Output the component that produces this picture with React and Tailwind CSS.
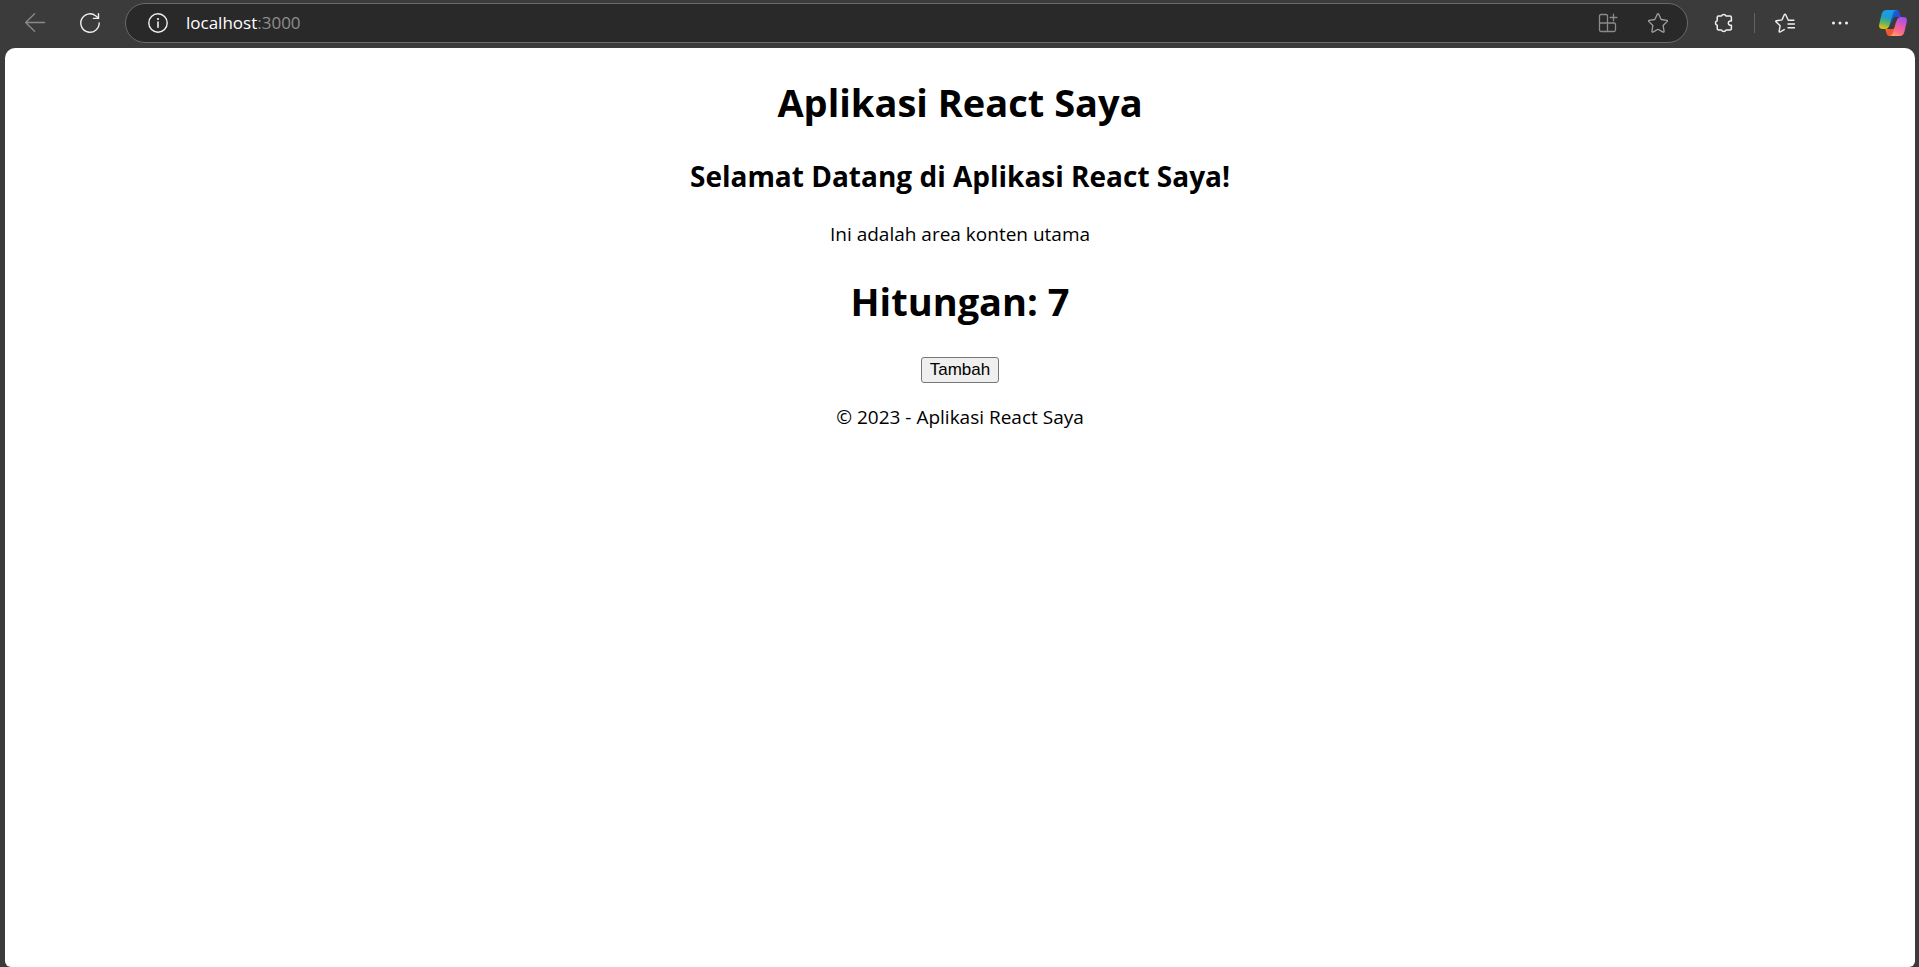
import { useState } from "react";

const stroke = {
  fill: "none",
  stroke: "currentColor",
  strokeWidth: 1.4,
  strokeLinecap: "round",
  strokeLinejoin: "round",
};

function BackIcon() {
  return (
    <svg viewBox="0 0 20 20" className="size-5" {...stroke} strokeWidth={1.3}>
      <path d="M19.5 9.5H.8M9.6.8.6 9.5l9 8.7" />
    </svg>
  );
}

function ReloadIcon() {
  return (
    <svg viewBox="0 0 20 20" className="size-5" {...stroke}>
      <path d="M19.2 10A9.2 9.2 0 1 1 15.6 2.7L18.4 5" />
      <path d="M18.5.8v4.6h-5" />
    </svg>
  );
}

function InfoIcon() {
  return (
    <svg viewBox="0 0 20 20" className="size-5" {...stroke}>
      <circle cx="10" cy="10" r="9.2" />
      <path d="M10 9v5.2" strokeWidth={1.6} />
      <circle cx="10" cy="6" r="1.1" fill="currentColor" stroke="none" />
    </svg>
  );
}

function AppsIcon() {
  return (
    <svg viewBox="0 0 20 20" className="size-5" {...stroke} strokeWidth={1.3}>
      <path d="M9.500 10V3Q9.500 1.500 8 1.500H3Q1.500 1.500 1.500 3V17Q1.500 18.500 3 18.500H16Q17.500 18.500 17.500 17V11.500Q17.500 10 16 10H1.500M9.500 10v8.500" />
      <path d="M15.500 1.200v6.600M12.200 4.500h6.600" />
    </svg>
  );
}

function StarIcon() {
  return (
    <svg viewBox="0 0 20 20" className="size-5" {...stroke} strokeWidth={1.3}>
      <path d="M9.300 1.200q.7-1 1.400 0l2.500 5.300 5.700.8q1 .3.4 1.100l-4.200 4.100 1 5.900q0 1-1 .7L10 16.300l-5.100 2.800q-1 .3-1-.7l1-5.900L.7 8.400q-.6-.8.4-1.100l5.700-.8z" />
    </svg>
  );
}

function ExtensionsIcon() {
  return (
    <svg viewBox="0 0 20 20" className="size-5" {...stroke} strokeWidth={1.5}>
      <path d="M5.600 3.100H8.500A2.400 2.400 0 0 1 13 3.100H17Q18.400 3.100 18.400 4.500V7.900H17A2.200 2.200 0 0 0 17 12.200H18.400V15.500Q18.400 17 17 17H13A2.400 2.400 0 0 1 8.500 17H5.700Q4.200 17 4.200 15.500V12.300A2.400 2.400 0 0 1 4.200 7.700V4.500Q4.200 3.100 5.600 3.100Z" />
    </svg>
  );
}

function FavoritesIcon() {
  return (
    <svg viewBox="0 0 20 20" className="size-5" {...stroke}>
      <path d="M18.900 7.300H13.300L10.700 1.700q-.7-1.100-1.400 0L7 6.900l-5.600.8q-1 .3-.4 1.100l4.100 4-1 5.500q0 1 1 .7L9.200 16.600" />
      <path d="M13 11h6.500M13 14.700h6.500" />
    </svg>
  );
}

function MoreIcon() {
  return (
    <svg viewBox="0 0 20 20" className="size-5" fill="currentColor">
      <circle cx="3.500" cy="10" r="1.500" />
      <circle cx="10" cy="10" r="1.500" />
      <circle cx="16.500" cy="10" r="1.500" />
    </svg>
  );
}

function CopilotIcon() {
  return (
    <svg viewBox="0 0 28 26" className="h-[26px] w-7">
      <defs>
        <linearGradient id="cp-left" x1=".6" y1="0" x2=".4" y2="1">
          <stop offset="0" stopColor="#189bf0" />
          <stop offset=".4" stopColor="#1c9fc4" />
          <stop offset=".7" stopColor="#5fb463" />
          <stop offset="1" stopColor="#e8c20e" />
        </linearGradient>
        <linearGradient id="cp-top" x1="0" y1="0" x2="1" y2="1">
          <stop offset="0" stopColor="#1790f0" />
          <stop offset=".5" stopColor="#1c4fd0" />
          <stop offset="1" stopColor="#2968e0" />
        </linearGradient>
        <linearGradient id="cp-right" x1=".7" y1="0" x2=".3" y2="1">
          <stop offset="0" stopColor="#a14ff0" />
          <stop offset=".45" stopColor="#e45bb0" />
          <stop offset=".75" stopColor="#fb6b87" />
          <stop offset="1" stopColor="#fda06a" />
        </linearGradient>
        <linearGradient id="cp-bottom" x1="0" y1="0" x2="1" y2="1">
          <stop offset="0" stopColor="#f7a51c" />
          <stop offset=".5" stopColor="#f0532e" />
          <stop offset="1" stopColor="#f86f5c" />
        </linearGradient>
      </defs>
      <path d="M8 0H17.500Q19.700 0 20.400 2.200L21.700 7H17.500Q15 7 14.200 9.500L12 17Z" fill="url(#cp-top)" />
      <path d="M20 26H10.500Q8.300 26 7.600 23.800L6.300 19H10.500Q13 19 13.800 16.500L16 9Z" fill="url(#cp-bottom)" />
      <path d="M7.500 0H16.500Q14.700.6 13.900 3.200L10.400 15.500Q9.400 19 6 19H4Q-.8 19 .3 14L2.500 4.500Q3.500 0 7.500 0Z" fill="url(#cp-left)" />
      <path d="M20.500 26H11.500Q13.300 25.400 14.100 22.800L17.600 10.500Q18.600 7 22 7H24Q28.800 7 27.700 12L25.500 21.500Q24.500 26 20.500 26Z" fill="url(#cp-right)" />
      <path d="M14 8.500Q14.600 7 16.500 7H19.800Q18.200 8 17.400 10.500L15.400 17.500Q15 19 13.500 19H9Q10.300 18 10.900 16Z" fill="#3b3b3b" />
    </svg>
  );
}

function BrowserBar() {
  return (
    <header className="flex h-12 items-center pt-0 pr-3 pb-0.5 pl-[25px] text-[#f0f0f0]">
      <button type="button" aria-label="Back" className="text-[#8a8a8a]">
        <BackIcon />
      </button>
      <button type="button" aria-label="Reload" className="ml-[35px]">
        <ReloadIcon />
      </button>
      <div className="ml-[25px] flex h-10 flex-1 items-center rounded-full border border-[#6a6a6a] bg-[#292929] pr-[19px] pl-[22px]">
        <button type="button" aria-label="Site information">
          <InfoIcon />
        </button>
        <a
          href="http://localhost:3000"
          className="ml-[18px] flex-1 text-[17px] leading-6 text-white"
        >
          localhost<span className="text-[#8e8e8e]">:3000</span>
        </a>
        <button type="button" aria-label="Install app" className="text-[#8a8a8a]">
          <AppsIcon />
        </button>
        <button type="button" aria-label="Add to favorites" className="ml-[30px] text-[#a0a0a0]">
          <StarIcon />
        </button>
      </div>
      <button type="button" aria-label="Extensions" className="ml-[25px]">
        <ExtensionsIcon />
      </button>
      <span className="ml-[21px] h-5 w-px bg-[#636363]" />
      <button type="button" aria-label="Favorites" className="ml-5">
        <FavoritesIcon />
      </button>
      <button type="button" aria-label="More" className="ml-[35px]">
        <MoreIcon />
      </button>
      <button type="button" aria-label="Copilot" className="ml-[29px]">
        <CopilotIcon />
      </button>
    </header>
  );
}

export default function App() {
  const [count, setCount] = useState(7);

  return (
    <div className="flex min-h-screen flex-col bg-[#3b3b3b] font-['Open_Sans','Noto_Sans',sans-serif]">
      <BrowserBar />
      <div className="mr-1 ml-[5px] flex flex-1 flex-col items-center rounded-t-[10px] rounded-b-md bg-white pt-7 text-center text-black">
        <h1 className="text-[38px] leading-[53px] font-bold">Aplikasi React Saya</h1>
        <main className="flex flex-col items-center">
          <h2 className="mt-[27px] text-[28px] leading-10 font-bold">
            Selamat Datang di Aplikasi React Saya!
          </h2>
          <p className="mt-[25px] text-[19px] leading-[27px]">Ini adalah area konten utama</p>
          <h1 className="mt-[27px] text-[38px] leading-[53px] font-bold">Hitungan: {count}</h1>
          <button
            type="button"
            onClick={() => setCount(count + 1)}
            className="mt-[29px] h-[26px] rounded-[3px] border border-[#767676] bg-[#efefef] px-2 font-['Liberation_Sans',Arial,sans-serif] text-[17px] leading-6"
          >
            Tambah
          </button>
        </main>
        <footer className="mt-[21px] text-[19px] leading-[27px]">© 2023 - Aplikasi React Saya</footer>
      </div>
    </div>
  );
}
